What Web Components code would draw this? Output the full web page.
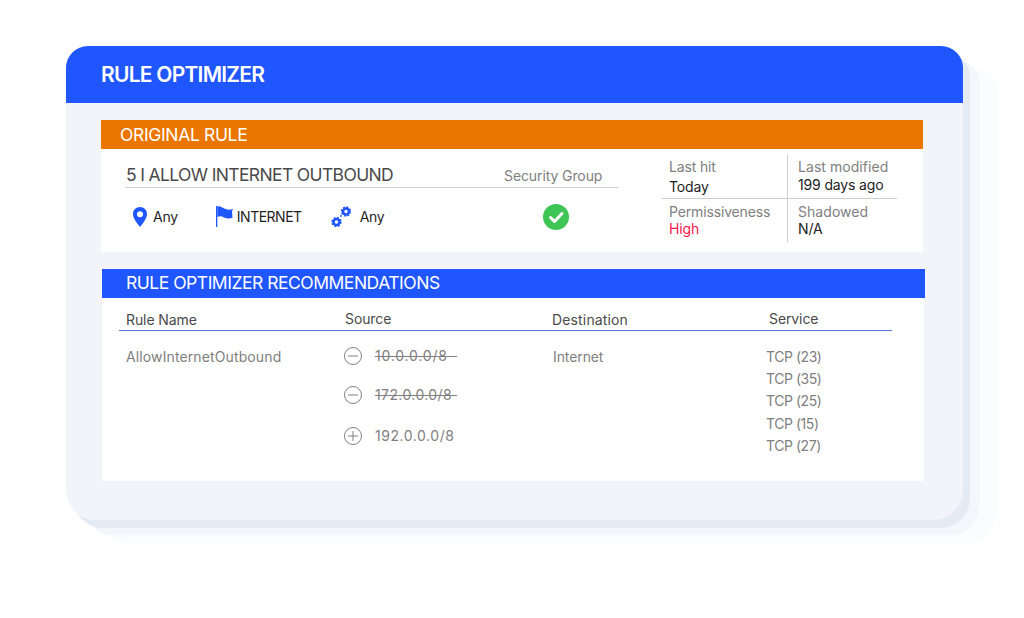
<!DOCTYPE html>
<html>
<head>
<meta charset="utf-8">
<title>Rule Optimizer</title>
<style>
html, body { margin: 0; background: #fff; }
body { font-family: Inter, "Open Sans", sans-serif; width: 1024px; height: 618px; overflow: hidden; }
</style>
</head>
<body>
<rule-optimizer></rule-optimizer>

<script>
class SectionBar extends HTMLElement {
    constructor() {
        super();
        this.shadowDOM = this.attachShadow({mode: "open"});
        this.shadowDOM.innerHTML = `
        <style>
        :host {
            display: flex;
            align-items: center;
            height: 29px;
            box-sizing: border-box;
            padding-left: var(--bar-pad, 19px);
            padding-bottom: var(--bar-lift, 0);
            background: var(--bar-color, #ea7600);
            color: #fff;
            font-size: 17.5px;
            letter-spacing: var(--bar-spacing, -0.35px);
            font-weight: 400;
        }
        </style>
        <slot></slot>`;
    }
}

class StatCell extends HTMLElement {
    constructor() {
        super();
        this.shadowDOM = this.attachShadow({mode: "open"});
        this.shadowDOM.innerHTML = `
        <style>
        :host {
            display: block;
            box-sizing: border-box;
            font-size: 14px;
        }
        .label { color: #808080; line-height: 18px; letter-spacing: var(--label-spacing, 0.05px); }
        .value { color: var(--value-color, #1d1d1d); line-height: 18px; margin-top: var(--value-shift, 0); letter-spacing: -0.15px; }
        </style>
        <div class="label"><slot name="label"></slot></div>
        <div class="value"><slot name="value"></slot></div>`;
    }
}

class RuleSummary extends HTMLElement {
    constructor() {
        super();
        this.shadowDOM = this.attachShadow({mode: "open"});
        this.shadowDOM.innerHTML = `
        <style>
        :host {
            display: flex;
            height: 103px;
            background: #fff;
            padding-left: 24px;
            gap: 43px;
            font-size: 14px;
        }
        .left { width: 493px; }
        .head {
            display: flex;
            height: 39px;
            box-sizing: border-box;
            border-bottom: 1.5px solid #cfcfcf;
        }
        .title {
            width: 379px;
            padding: 15px 0 0 1px;
            box-sizing: border-box;
            color: #4a4a4a;
            font-size: 17.5px;
            letter-spacing: -0.64px;
            line-height: 22px;
            white-space: nowrap;
        }
        .group {
            padding-top: 18px;
            color: #808080;
            letter-spacing: -0.1px;
            line-height: 18px;
        }
        .row { display: flex; align-items: center; height: 57px; color: #1f1f1f; letter-spacing: -0.25px; }
        .item { display: flex; align-items: center; flex: none; }
        .pin { margin-left: 8px; }
        .pin span { margin-left: 6px; }
        .flag { margin-left: 38px; }
        .flag span { margin-left: 3px; letter-spacing: -0.5px; }
        .gears { margin-left: 29px; }
        .gears span { margin-left: 9px; }
        .ok { margin-left: 159px; display: block; flex: none; }
        .stats {
            width: 236px;
            margin-top: 6px;
            height: 87px;
            display: grid;
            grid-template-columns: 127px 109px;
            grid-template-rows: 44px 43px;
        }
        .stats stat-cell:nth-child(odd) { padding-left: 8px; border-right: 1.5px solid #cfcfcf; --label-spacing: -0.15px; }
        .stats stat-cell:nth-child(even) { padding-left: 10px; }
        .stats stat-cell:nth-child(-n+2) { border-bottom: 1.5px solid #cfcfcf; padding-top: 3px; }
        .stats stat-cell:nth-child(n+3) { padding-top: 4px; --value-shift: -1px; }
        .stats stat-cell:first-child { --value-shift: 2px; }
        </style>
        <div class="left">
            <div class="head">
                <div class="title">5 I ALLOW INTERNET OUTBOUND</div>
                <div class="group">Security Group</div>
            </div>
            <div class="row">
                <div class="item pin">
                    <svg width="14" height="20" viewBox="0 0 14 20"><path fill-rule="evenodd" fill="#2056ff" d="M7 0C3 0 0 3 0 7c0 4.600 4.600 9.700 7 13 2.400-3.300 7-8.400 7-13 0-4-3-7-7-7zm0 4.200a3 3 0 1 1 0 6 3 3 0 0 1 0-6z"/></svg>
                    <span>Any</span>
                </div>
                <div class="item flag">
                    <svg width="18" height="21" viewBox="0 0 18 21"><path fill="#2056ff" d="M0 0h1.300v21H0z"/><path fill="#2056ff" d="M1.300.5C4 -.5 6 1.500 9 2.800c3 1.200 5 .9 8 .3-1 2-1.300 3-.6 5-.2 1.300-.2 2.400.2 3.700-3 .8-5.500.9-8.600-.4C5.500 10.200 4 9.600 1.300 11z"/></svg>
                    <span>INTERNET</span>
                </div>
                <div class="item gears">
                    <svg width="20" height="22" viewBox="0 0 20 22">
                        <g fill="none" stroke="#2056ff">
                            <circle cx="15" cy="5.500" r="3" stroke-width="2.600"/>
                            <circle cx="15" cy="5.500" r="4.300" stroke-width="1.800" stroke-dasharray="1.800 1.570"/>
                            <circle cx="5.500" cy="16" r="3" stroke-width="2.600"/>
                            <circle cx="5.500" cy="16" r="4.300" stroke-width="1.800" stroke-dasharray="1.800 1.570"/>
                        </g>
                        <circle cx="10" cy="10" r=".9" fill="#2056ff"/>
                    </svg>
                    <span>Any</span>
                </div>
                <svg class="ok" width="26" height="26" viewBox="0 0 26 26"><circle cx="13" cy="13" r="13" fill="#3fc555"/><path d="M7.500 13.500l4 4 7.500-8" fill="none" stroke="#fff" stroke-width="3" stroke-linecap="round" stroke-linejoin="round"/></svg>
            </div>
        </div>
        <div class="stats"></div>`;
    }
    connectedCallback() {
        // grid children live in the shadow so the line rules can reach them
        const stats = this.shadowDOM.querySelector(".stats");
        stats.innerHTML = [
            ["Last hit", "Today", ""],
            ["Last modified", "199 days ago", ""],
            ["Permissiveness", "High", "--value-color:#f5174a"],
            ["Shadowed", "N/A", ""]
        ].map(s => `<stat-cell style="${s[2]}"><span slot="label">${s[0]}</span><span slot="value">${s[1]}</span></stat-cell>`).join("");
    }
}

class SourceRow extends HTMLElement {
    constructor() {
        super();
        this.shadowDOM = this.attachShadow({mode: "open"});
    }
    connectedCallback() {
        const removed = this.getAttribute("kind") === "minus";
        this.shadowDOM.innerHTML = `
        <style>
        :host { display: flex; align-items: center; height: 20px; color: #808080; letter-spacing: var(--src-spacing, .55px); }
        svg { flex: none; margin-right: 13px; }
        .txt { position: relative; white-space: nowrap; ${removed ? "width: 81.5px;" : ""} }
        .strike { position: absolute; left: 0; right: 0; top: 50%; height: 1px; background: #808080; }
        </style>
        <svg width="18" height="18" viewBox="0 0 18 18" fill="none" stroke="#808080" stroke-width="1">
            <circle cx="9" cy="9" r="8.500"/>
            <path d="M4 9h10${removed ? "" : "M9 4v10"}"/>
        </svg>
        <span class="txt"><slot></slot>${removed ? '<span class="strike"></span>' : ""}</span>`;
    }
}

class RecsTable extends HTMLElement {
    constructor() {
        super();
        this.shadowDOM = this.attachShadow({mode: "open"});
        this.shadowDOM.innerHTML = `
        <style>
        :host {
            display: block;
            height: 183px;
            box-sizing: border-box;
            background: #fff;
            padding: 0 32px 0 17px;
            font-size: 14px;
        }
        .head, .body { display: grid; grid-template-columns: 226px 207px 217px 1fr; }
        .head {
            height: 33px;
            box-sizing: border-box;
            border-bottom: 1.5px solid #5b76d8;
            color: #4a4a4a;
            letter-spacing: -0.1px;
            line-height: 18px;
            padding-top: 12px;
        }
        .head div:first-child, .body .name { padding-left: 7px; }
        .head .low { padding-top: 1px; }
        .head .dest-h { letter-spacing: .15px; }
        .body { padding-top: 17px; color: #808080; letter-spacing: -0.1px; line-height: 18px; }
        .name { letter-spacing: .12px; }
        .sources source-row + source-row { margin-top: 19px; }
        .sources source-row:last-child { margin-top: 21px; }
        .sources { margin: -2px 0 0 -1px; }
        .services { margin-left: -3px; line-height: 22.200px; margin-top: -2px; letter-spacing: -0.45px; }
        .dest { padding-left: 1px; }
        </style>
        <div class="head">
            <div class="low">Rule Name</div><div>Source</div><div class="low dest-h">Destination</div><div>Service</div>
        </div>
        <div class="body">
            <div class="name">AllowInternetOutbound</div>
            <div class="sources">
                <source-row kind="minus" style="--src-spacing:.8px">10.0.0.0/8</source-row>
                <source-row kind="minus" style="--src-spacing:.4px">172.0.0.0/8</source-row>
                <source-row kind="plus">192.0.0.0/8</source-row>
            </div>
            <div class="dest">Internet</div>
            <div class="services">
                <div>TCP (23)</div><div>TCP (35)</div><div>TCP (25)</div><div>TCP (15)</div><div>TCP (27)</div>
            </div>
        </div>`;
    }
}

class RuleOptimizer extends HTMLElement {
    constructor() {
        super();
        this.shadowDOM = this.attachShadow({mode: "open"});
        this.shadowDOM.innerHTML = `
        <style>
        :host { display: block; padding: 46px 0 0 66px; }
        .card {
            width: 897px;
            height: 474px;
            box-sizing: border-box;
            background: #f2f4f9;
            border-radius: 22px 22px 30px 30px;
            box-shadow: 7px 8px 0 #e4ebf5, 17px 15px 0 #f3f6fb, 34px 23px 0 #fbfcfe;
        }
        .top {
            height: 57px;
            box-sizing: border-box;
            background: #2056ff;
            border-radius: 22px 22px 0 0;
            color: #fff;
            font-size: 21px;
            font-weight: 600;
            letter-spacing: -0.75px;
            display: flex;
            align-items: center;
            padding: 0 0 0 35px;
        }
        .orig { margin: 17px 40px 0 35px; }
        .recs { margin: 17px 39px 0 36px; }
        .recs section-bar { --bar-color: #2056ff; --bar-pad: 24px; --bar-spacing: -0.48px; --bar-lift: 2px; margin-right: -1px; }
        </style>
        <div class="card">
            <div class="top">RULE OPTIMIZER</div>
            <div class="orig">
                <section-bar>ORIGINAL RULE</section-bar>
                <rule-summary></rule-summary>
            </div>
            <div class="recs">
                <section-bar>RULE OPTIMIZER RECOMMENDATIONS</section-bar>
                <recs-table></recs-table>
            </div>
        </div>`;
    }
}

customElements.define("section-bar", SectionBar);
customElements.define("stat-cell", StatCell);
customElements.define("rule-summary", RuleSummary);
customElements.define("source-row", SourceRow);
customElements.define("recs-table", RecsTable);
customElements.define("rule-optimizer", RuleOptimizer);
</script>
</body>
</html>
